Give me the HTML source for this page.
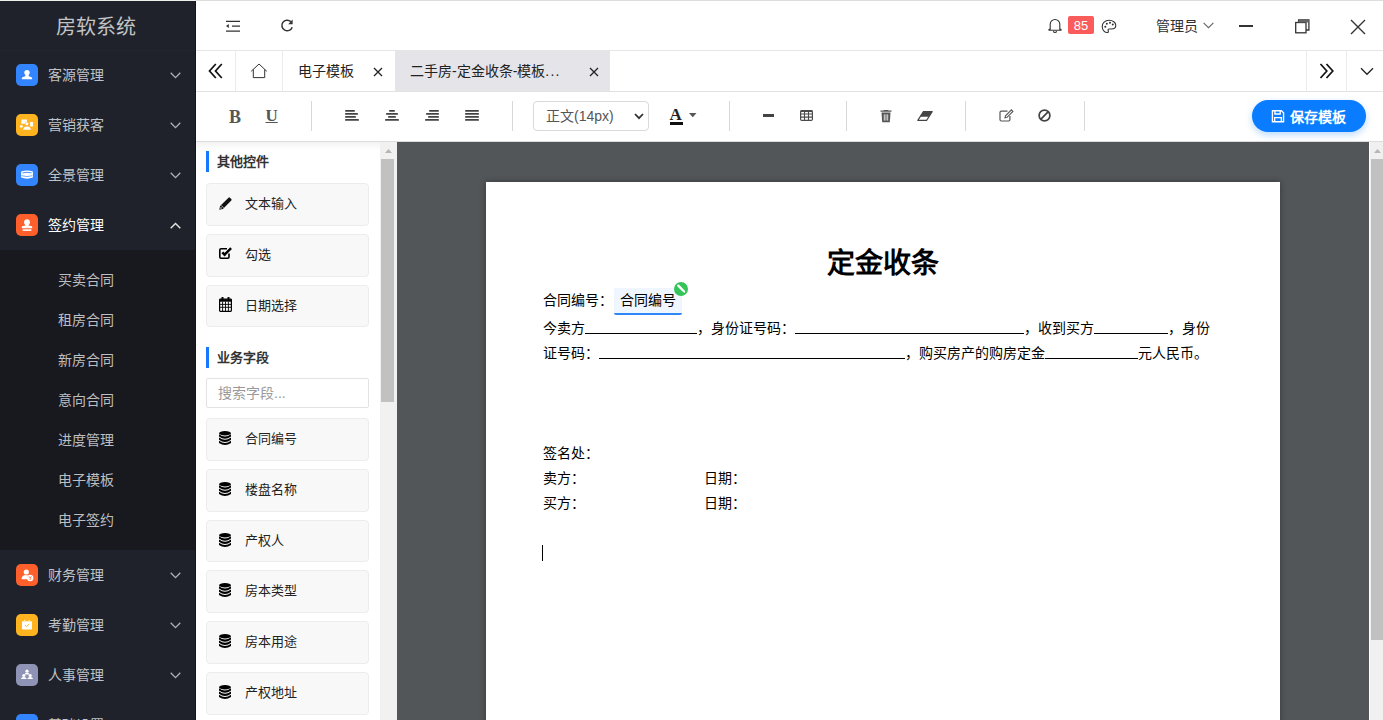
<!DOCTYPE html>
<html lang="zh-CN"><head><meta charset="utf-8">
<style>
*{box-sizing:border-box;margin:0;padding:0}
html,body{width:1383px;height:720px;overflow:hidden;background:#fff;font-family:"Liberation Sans",sans-serif;color:#333}
.abs{position:absolute}
#topline{position:absolute;left:0;top:0;width:1383px;height:1px;background:linear-gradient(90deg,#eef0ee 196px,#dcdedc 196px)}
#side{position:absolute;left:0;top:1px;width:196px;height:719px;background:#1f222a;overflow:hidden;border-right:1px solid #11141a}
#logo{position:absolute;left:0;top:0;width:195px;height:50px;border-bottom:1px solid #23262e;color:#c2c3c5;font-size:20px;line-height:49px;text-align:center;padding-top:2px;padding-right:3px}
.mi{position:absolute;left:0;width:195px;height:50px}
.mi .ic{position:absolute;left:16px;top:14px;width:22px;height:22px;border-radius:5px}
.mi .tx{position:absolute;left:48px;top:1px;line-height:48px;font-size:14px;color:#bfc2c8}
.mi .ch{position:absolute;left:170px;top:21.5px}
#sub{position:absolute;left:0;top:249px;width:195px;height:300px;background:#18191e}
.si{position:absolute;left:58px;font-size:14px;color:#bdbec1;line-height:20px}
#header{position:absolute;left:196px;top:1px;width:1187px;height:50px;background:#fff;border-bottom:1px solid #e6e6e6}
#tabs{position:absolute;left:196px;top:51px;width:1187px;height:41px;background:#fff;border-bottom:1px solid #e2e2e2}
#toolbar{position:absolute;left:196px;top:92px;width:1187px;height:50px;background:#fff;border-bottom:1px solid #dcdcdc}
#lp{position:absolute;left:196px;top:142px;width:201px;height:578px;background:#fff}
#canvas{position:absolute;left:397px;top:142px;width:972px;height:578px;background:#525659;overflow:hidden}
#paper{position:absolute;left:89px;top:40px;width:794px;height:800px;background:#fff;box-shadow:0 0 6px rgba(0,0,0,.35)}
.sep{position:absolute;top:9px;width:1px;height:30px;background:#d8d8d8}
#lpshadow{position:absolute;left:0;top:0;width:184px;height:8px;background:linear-gradient(rgba(0,0,0,.05),rgba(0,0,0,0))}
.ttl{position:absolute;left:10px;height:21px;padding-left:11px;font-size:13px;font-weight:bold;line-height:21px;color:#333}
.ttl .bar{position:absolute;left:0;top:0;width:3px;height:21px;background:#1677ff}
.card{position:absolute;left:10px;width:163px;height:42.8px;background:#f8f8f8;border:1px solid #ececec;border-radius:4px}
.cic{position:absolute;left:13px;top:14px;line-height:0}
.ctx{position:absolute;left:38px;top:10px;font-size:13px;line-height:20px;color:#222}
#search{position:absolute;left:10px;top:236px;width:163px;height:30px;border:1px solid #e3e3e3;border-radius:2px;font-size:14px;line-height:28px;padding-left:11px;color:#9a9a9a}
#lsb{position:absolute;left:184px;top:0;width:17px;height:578px;background:#f1f1f1}
#lthumb{position:absolute;left:1px;top:17px;width:13px;height:243px;background:#c1c1c1}
.pt{position:absolute;left:0;top:62px;width:794px;text-align:center;font-size:28px;font-weight:bold;line-height:40px;color:#000}
.pl{position:absolute;left:56.7px;font-size:14px;line-height:20px;color:#000;white-space:nowrap}
.u{display:inline-block;height:14px;border-bottom:1px solid #000;vertical-align:-1px}
.wg{position:absolute;left:128px;top:106px;width:68px;height:27px;background:#eff6ff;border-bottom:2px solid #2f86f6;border-radius:1px 1px 2px 2px}
.gb{position:absolute;left:188px;top:100px;line-height:0}
#rsb{position:absolute;left:1369px;top:142px;width:14px;height:578px;background:#f0f0f0;border-left:1px solid #fff}
</style></head><body>
<div id="topline"></div>
<div id="side">
  <div id="logo">房软系统</div>
<div class="mi" style="top:49px"><div class="ic" style="background:#3385ff"><svg width="22" height="22" viewBox="0 0 22 22"><circle cx="11" cy="8.6" r="2.7" fill="#fff"/><path d="M9.6 10.5 L12.4 10.5 L12.9 12.3 L16 13.6 L16.2 15.2 L5.8 15.2 L6 13.6 L9.1 12.3Z" fill="#fff"/></svg></div><div class="tx">客源管理</div><svg class="ch" width="11" height="7" viewBox="0 0 11 7"><path d="M0.7 0.7 L5.5 5.6 L10.3 0.7" fill="none" stroke="#aeb1b7" stroke-width="1.3"/></svg></div>
<div class="mi" style="top:99px"><div class="ic" style="background:#ffb31f"><svg width="22" height="22" viewBox="0 0 22 22"><path d="M5.6 5.4H11.2L10.6 9.8H5.1Z" fill="#fff"/><rect x="14.1" y="7.9" width="3" height="4.5" rx="0.4" fill="#fff"/><rect x="3.8" y="11.2" width="3" height="2.4" rx="1" fill="#fff"/><circle cx="10.9" cy="9.7" r="1.9" fill="#ffb31f"/><circle cx="10.9" cy="9.7" r="1.5" fill="#fff"/><path d="M7.2 15.7Q7.5 12.6 11 12.6Q14.5 12.6 14.8 15.7Z" fill="#fff"/></svg></div><div class="tx">营销获客</div><svg class="ch" width="11" height="7" viewBox="0 0 11 7"><path d="M0.7 0.7 L5.5 5.6 L10.3 0.7" fill="none" stroke="#aeb1b7" stroke-width="1.3"/></svg></div>
<div class="mi" style="top:149px"><div class="ic" style="background:#3385ff"><svg width="22" height="22" viewBox="0 0 22 22"><path d="M5.1 7.4Q11 5.6 16.9 7.4V13.6Q11 15.8 5.1 13.6Z" fill="#fff"/><path d="M6.4 8.9Q11 7.6 15.6 8.9" stroke="#3385ff" stroke-width="0.9" fill="none"/><path d="M5.6 11.7Q11 13.4 16.4 11.7" stroke="#3385ff" stroke-width="0.7" fill="none"/></svg></div><div class="tx">全景管理</div><svg class="ch" width="11" height="7" viewBox="0 0 11 7"><path d="M0.7 0.7 L5.5 5.6 L10.3 0.7" fill="none" stroke="#aeb1b7" stroke-width="1.3"/></svg></div>
<div class="mi" style="top:199px"><div class="ic" style="background:#ff5f2a"><svg width="22" height="22" viewBox="0 0 22 22"><circle cx="11" cy="8.2" r="2.9" fill="#fff"/><path d="M9.6 10L12.4 10L12.6 11.6L15.9 12.2Q16.2 12.3 16.2 12.7V14.3H5.8V12.7Q5.8 12.3 6.1 12.2L9.4 11.6Z" fill="#fff"/><rect x="6.6" y="15.3" width="8.8" height="1.6" fill="#fff"/></svg></div><div class="tx" style="color:#fff">签约管理</div><svg class="ch" width="11" height="7" viewBox="0 0 11 7"><path d="M0.7 6.3 L5.5 1.4 L10.3 6.3" fill="none" stroke="#e6e6e6" stroke-width="1.4"/></svg></div>
<div class="mi" style="top:549px"><div class="ic" style="background:#ff5f2a"><svg width="22" height="22" viewBox="0 0 22 22"><circle cx="10.3" cy="8" r="2.6" fill="#fff"/><path d="M5.5 15.2 Q5.8 11.2 9.2 10.9 L12 11.5 Q10.4 13 11.2 15.2Z" fill="#fff"/><circle cx="14.2" cy="14" r="3.2" fill="#fff"/><path d="M13 12.3 L14.2 13.9 L15.4 12.3 M14.2 13.9 L14.2 16" stroke="#ff5f2a" stroke-width="0.8" fill="none"/></svg></div><div class="tx">财务管理</div><svg class="ch" width="11" height="7" viewBox="0 0 11 7"><path d="M0.7 0.7 L5.5 5.6 L10.3 0.7" fill="none" stroke="#aeb1b7" stroke-width="1.3"/></svg></div>
<div class="mi" style="top:599px"><div class="ic" style="background:#ffb31f"><svg width="22" height="22" viewBox="0 0 22 22"><rect x="6" y="7.3" width="10" height="8.3" rx="0.8" fill="#fff"/><rect x="8" y="5.8" width="1.3" height="2.4" fill="#ffe7a8"/><rect x="12.7" y="5.8" width="1.3" height="2.4" fill="#ffe7a8"/><path d="M8.9 11.2 L10.5 12.6 L13.2 10.1" stroke="#ffb31f" stroke-width="1" fill="none"/></svg></div><div class="tx">考勤管理</div><svg class="ch" width="11" height="7" viewBox="0 0 11 7"><path d="M0.7 0.7 L5.5 5.6 L10.3 0.7" fill="none" stroke="#aeb1b7" stroke-width="1.3"/></svg></div>
<div class="mi" style="top:649px"><div class="ic" style="background:#8f93b5"><svg width="22" height="22" viewBox="0 0 22 22"><circle cx="11" cy="7.2" r="1.6" fill="#fff"/><path d="M8.4 10.5 Q8.6 8.8 11 8.8 Q13.4 8.8 13.6 10.5Z" fill="#fff"/><circle cx="7.8" cy="11.5" r="1.6" fill="#fff"/><path d="M5 15 Q5.2 13.1 7.8 13.1 Q10.4 13.1 10.6 15Z" fill="#fff"/><circle cx="14.2" cy="11.5" r="1.6" fill="#fff"/><path d="M11.4 15 Q11.6 13.1 14.2 13.1 Q16.8 13.1 17 15Z" fill="#fff"/></svg></div><div class="tx">人事管理</div><svg class="ch" width="11" height="7" viewBox="0 0 11 7"><path d="M0.7 0.7 L5.5 5.6 L10.3 0.7" fill="none" stroke="#aeb1b7" stroke-width="1.3"/></svg></div>
<div class="mi" style="top:699px"><div class="ic" style="background:#3385ff"><svg width="22" height="22" viewBox="0 0 22 22"><circle cx="11" cy="9" r="3" fill="#fff"/></svg></div><div class="tx">基础设置</div><svg class="ch" width="11" height="7" viewBox="0 0 11 7"><path d="M0.7 0.7 L5.5 5.6 L10.3 0.7" fill="none" stroke="#aeb1b7" stroke-width="1.3"/></svg></div>
<div id="sub"><div class="si" style="top:20px">买卖合同</div><div class="si" style="top:60px">租房合同</div><div class="si" style="top:100px">新房合同</div><div class="si" style="top:140px">意向合同</div><div class="si" style="top:180px">进度管理</div><div class="si" style="top:220px">电子模板</div><div class="si" style="top:260px">电子签约</div></div>
</div>
<div id="header">
<svg class="abs" style="left:29px;top:18px" width="16" height="14" viewBox="0 0 16 14"><path d="M1 2.3H15M7 7.1H15M1 12.1H15" stroke="#333" stroke-width="1.25"/><path d="M1 7.1L3.8 5.1V9.1Z" fill="#333"/></svg>
<svg class="abs" style="left:83px;top:17px" width="16" height="16" viewBox="0 0 16 16"><path d="M13.2 9.2A5.3 5.3 0 1 1 11.8 3.6" fill="none" stroke="#333" stroke-width="1.5"/><path d="M13.6 1.6V6.2H9.2Z" fill="#333"/></svg>
<svg class="abs" style="left:852px;top:17px" width="14" height="15" viewBox="0 0 14 15"><path d="M2.2 11.3V6.3A4.8 4.8 0 0 1 11.8 6.3V11.3H13V12.3H1V11.3Z" fill="none" stroke="#333" stroke-width="1.1" stroke-linejoin="round"/><path d="M5.3 13.2A1.8 1.8 0 0 0 8.7 13.2" fill="none" stroke="#333" stroke-width="1.1"/></svg>
<div class="abs" style="left:872px;top:15px;width:26px;height:18px;background:#fa5c5c;border-radius:2px;color:#fff;font-size:13px;line-height:19.5px;text-align:center">85</div>
<svg class="abs" style="left:905px;top:18px" width="16" height="15" viewBox="0 0 16 15"><path d="M8 1.3C4 1.3 1.2 4.2 1.2 7.6 1.2 10.9 3.7 13.5 6.3 13.5 7.4 13.5 7.6 12.6 7.2 11.8 6.8 11 7.2 10 8.2 10H10.3C12.9 10 14.8 8.6 14.8 6.5 14.8 3.5 11.8 1.3 8 1.3Z" fill="none" stroke="#333" stroke-width="1.1"/><circle cx="4.3" cy="7.8" r="1" fill="#333"/><circle cx="5.8" cy="4.8" r="1" fill="#333"/><circle cx="9" cy="3.8" r="1" fill="#333"/><circle cx="11.8" cy="5.6" r="1" fill="#333"/></svg>
<div class="abs" style="left:960px;top:15px;font-size:14px;line-height:20px;color:#303133">管理员</div>
<svg class="abs" style="left:1007px;top:21px" width="11" height="7" viewBox="0 0 11 7"><path d="M0.6 0.8L5.5 5.7L10.4 0.8" fill="none" stroke="#666" stroke-width="1.1"/></svg>
<div class="abs" style="left:1042.5px;top:24px;width:14.5px;height:1.6px;background:#333"></div>
<svg class="abs" style="left:1099px;top:18px" width="15" height="15" viewBox="0 0 15 15"><rect x="0.7" y="3.5" width="10.3" height="10.3" fill="#fff" stroke="#333" stroke-width="1.3"/><path d="M3.6 3.5V0.8H13.9V11H11" fill="none" stroke="#333" stroke-width="1.3"/><rect x="3.6" y="0.8" width="10.3" height="2.7" fill="#666"/></svg>
<svg class="abs" style="left:1154px;top:18px" width="16" height="16" viewBox="0 0 16 16"><path d="M1 1L15 15M15 1L1 15" stroke="#333" stroke-width="1.4"/></svg>
</div>
<div id="tabs">
<svg class="abs" style="left:12px;top:12px" width="16" height="17" viewBox="0 0 16 17"><path d="M7.8 1L1.5 8L7.8 15M13.8 1L7.5 8L13.8 15" fill="none" stroke="#111" stroke-width="1.7"/></svg>
<div class="abs" style="left:39px;top:0;width:1px;height:40px;background:#ececec"></div>
<svg class="abs" style="left:54px;top:12px" width="18" height="16" viewBox="0 0 18 16"><path d="M1.2 8.3L9 1L16.8 8.3M3.3 6.5V14.6H14.7V6.5" fill="none" stroke="#333" stroke-width="1"/></svg>
<div class="abs" style="left:86px;top:0;width:1px;height:40px;background:#ececec"></div>
<div class="abs" style="left:102px;top:10px;font-size:14px;line-height:20px;color:#222">电子模板</div>
<svg class="abs" style="left:177px;top:16px" width="10" height="10" viewBox="0 0 10 10"><path d="M1 1L9 9M9 1L1 9" stroke="#222" stroke-width="1.3"/></svg>
<div class="abs" style="left:199px;top:0;width:215px;height:40px;background:#e4e4e9"></div>
<div class="abs" style="left:214px;top:10px;font-size:14px;line-height:20px;color:#222;white-space:nowrap">二手房-定金收条-模板<span style="letter-spacing:1.2px">...</span></div>
<svg class="abs" style="left:393px;top:16px" width="10" height="10" viewBox="0 0 10 10"><path d="M1 1L9 9M9 1L1 9" stroke="#222" stroke-width="1.3"/></svg>
<div class="abs" style="left:1110px;top:0;width:1px;height:40px;background:#ececec"></div>
<svg class="abs" style="left:1123px;top:12px" width="16" height="17" viewBox="0 0 16 17"><path d="M1.5 1L7.8 8L1.5 15M7.5 1L13.8 8L7.5 15" fill="none" stroke="#111" stroke-width="1.7"/></svg>
<div class="abs" style="left:1150px;top:0;width:1px;height:40px;background:#ececec"></div>
<svg class="abs" style="left:1164px;top:16px" width="14" height="9" viewBox="0 0 14 9"><path d="M1 1.3L7 7.3L13 1.3" fill="none" stroke="#222" stroke-width="1.3"/></svg>
</div>
<div id="toolbar">
<div class="abs" style="left:33px;top:14px;font-family:'Liberation Serif',serif;font-weight:bold;font-size:18px;line-height:22px;color:#555">B</div>
<div class="abs" style="left:69.5px;top:13px;font-family:'Liberation Serif',serif;font-weight:bold;font-size:17px;line-height:22px;color:#555;text-decoration:underline;text-underline-offset:1px">U</div>
<div class="sep" style="left:115px"></div>
<svg class="abs" style="left:149px;top:17px" width="14" height="13" viewBox="0 0 14 13"><path d="M0.85 1.85H9.15M0.85 4.95H12.15M0.85 7.95H10.15M0.85 10.95H13.15" stroke="#444" stroke-width="1.7" stroke-linecap="round"/></svg>
<svg class="abs" style="left:189px;top:17px" width="14" height="13" viewBox="0 0 14 13"><path d="M4.85 1.85H9.15M1.85 4.95H12.15M3.85 7.95H10.15M0.85 10.95H13.15" stroke="#444" stroke-width="1.7" stroke-linecap="round"/></svg>
<svg class="abs" style="left:229px;top:17px" width="14" height="13" viewBox="0 0 14 13"><path d="M4.85 1.85H13.15M1.85 4.95H13.15M3.85 7.95H13.15M0.85 10.95H13.15" stroke="#444" stroke-width="1.7" stroke-linecap="round"/></svg>
<svg class="abs" style="left:269px;top:17px" width="14" height="13" viewBox="0 0 14 13"><path d="M0.85 1.85H13.15M0.85 4.95H13.15M0.85 7.95H13.15M0.85 10.95H13.15" stroke="#444" stroke-width="1.7" stroke-linecap="round"/></svg>
<div class="sep" style="left:316px"></div>
<div class="abs" style="left:337px;top:9px;width:116px;height:30px;border:1px solid #d9d9d9;border-radius:4px"></div>
<div class="abs" style="left:350px;top:14px;font-size:14px;line-height:20px;color:#555">正文(14px)</div>
<svg class="abs" style="left:438px;top:21px" width="10" height="7" viewBox="0 0 10 7"><path d="M1 1L5 5.2L9 1" fill="none" stroke="#333" stroke-width="1.8"/></svg>
<div class="abs" style="left:473.5px;top:13px;font-family:'Liberation Serif',serif;font-weight:bold;font-size:17px;line-height:20px;color:#222">A</div>
<div class="abs" style="left:474px;top:30px;width:13px;height:3px;background:#111"></div>
<svg class="abs" style="left:493px;top:21px" width="8" height="5" viewBox="0 0 8 5"><path d="M0 0H7.5L3.75 4.2Z" fill="#555"/></svg>
<div class="sep" style="left:533px"></div>
<div class="abs" style="left:567px;top:22px;width:11px;height:3px;background:#444"></div>
<svg class="abs" style="left:604px;top:18px" width="13" height="11" viewBox="0 0 13 11"><rect x="0.6" y="0.7" width="11.8" height="9.7" rx="1.2" fill="none" stroke="#4a4a4a" stroke-width="1.2"/><path d="M0.6 1.2H12.4" stroke="#4a4a4a" stroke-width="1.6"/><path d="M0.6 4H12.4M0.6 7.1H12.4M4.5 1V10.4M8.5 1V10.4" stroke="#4a4a4a" stroke-width="1.1"/></svg>
<div class="sep" style="left:650px"></div>
<svg class="abs" style="left:683.5px;top:18px" width="12" height="13" viewBox="0 0 12 13"><path d="M0.5 1.2H11.5M4.3 1V0.3H7.7V1" stroke="#555" stroke-width="1.2" fill="none"/><path d="M1.5 2.6H10.5L9.8 12.3H2.2Z" fill="#555"/><path d="M4.3 4.3V10.6M6 4.3V10.6M7.7 4.3V10.6" stroke="#fff" stroke-width="0.8"/></svg>
<svg class="abs" style="left:720.5px;top:19px" width="16" height="10" viewBox="0 0 16 10"><path d="M6.4 0.6H15.2L9.6 9.4H0.8Z" fill="none" stroke="#444" stroke-width="1.1" stroke-linejoin="round"/><path d="M6.4 0.6H15.2L11.9 5.8H3.1Z" fill="#444"/></svg>
<div class="sep" style="left:769px"></div>
<svg class="abs" style="left:802.5px;top:16.5px" width="15" height="13" viewBox="0 0 15 13"><path d="M8.5 2.2H2.3Q1 2.2 1 3.5V10.8Q1 12 2.3 12H9.6Q10.9 12 10.9 10.8V7" fill="none" stroke="#555" stroke-width="1.2"/><path d="M12.4 0.9L13.9 2.4L8 8.3L6 8.8L6.5 6.8Z" fill="none" stroke="#555" stroke-width="1.1"/></svg>
<svg class="abs" style="left:842px;top:17px" width="13" height="13" viewBox="0 0 13 13"><circle cx="6.5" cy="6.5" r="5.4" fill="none" stroke="#444" stroke-width="1.7"/><path d="M2.7 10.3L10.3 2.7" stroke="#444" stroke-width="1.7"/></svg>
<div class="sep" style="left:888px"></div>
<div class="abs" style="left:1056px;top:8px;width:114px;height:32px;border-radius:16px;background:#0a7cff;box-shadow:0 3px 7px rgba(10,124,255,.28)"></div>
<svg class="abs" style="left:1075px;top:18px" width="14" height="12.5" viewBox="0 0 14 13"><path d="M1.2 0.8H10.5L12.8 3V12.2H1.2Z" fill="none" stroke="#fff" stroke-width="1.4"/><path d="M3.8 0.8V4.2H9.3V0.8M3.5 12.2V8H10.5V12.2" fill="none" stroke="#fff" stroke-width="1.4"/></svg>
<div class="abs" style="left:1094px;top:15px;font-size:14px;line-height:20px;color:#fff;font-weight:bold">保存模板</div>
</div>
<div id="lp">
<div id="lpshadow"></div>
<div class="ttl" style="top:8.5px"><div class="bar" style="top:0.5px"></div>其他控件</div>
<div class="card" style="top:41.0px"><div class="cic"><svg width="13" height="13" viewBox="0 0 13 13" style="margin-left:-1.5px;margin-top:-1px"><path d="M0.3 12.7L1.1 9.1L9.5 0.7Q10.2 0 10.9 0.7L12.3 2.1Q13 2.8 12.3 3.5L3.9 11.9Z" fill="#111"/><path d="M2.2 8.4L4.6 10.8" stroke="#fff" stroke-width="0.7"/><circle cx="2" cy="11" r="0.7" fill="#fff"/></svg></div><div class="ctx">文本输入</div></div>
<div class="card" style="top:91.8px"><div class="cic"><svg width="14" height="12" viewBox="0 0 14 12" style="margin-left:-1.5px;margin-top:-2px"><path d="M10 6.6V10Q10 11.2 8.8 11.2H2Q0.8 11.2 0.8 10V3Q0.8 1.8 2 1.8H8" fill="none" stroke="#000" stroke-width="1.6"/><path d="M3.3 5.4L5.6 7.7L12.1 1.2" fill="none" stroke="#000" stroke-width="2.4"/></svg></div><div class="ctx">勾选</div></div>
<div class="card" style="top:142.6px"><div class="cic"><svg width="13" height="15" viewBox="0 0 13 15" style="margin-left:-1.5px;margin-top:-3px"><rect x="2.5" y="0" width="2" height="3" rx="0.5" fill="#000"/><rect x="8.5" y="0" width="2" height="3" rx="0.5" fill="#000"/><rect x="0.6" y="2.2" width="11.8" height="12.2" rx="0.8" fill="none" stroke="#000" stroke-width="1.2"/><path d="M0.6 3.5H12.4" stroke="#000" stroke-width="2.4"/><path d="M0.6 7.4H12.4M0.6 10.3H12.4M3.6 4.6V14.4M6.5 4.6V14.4M9.4 4.6V14.4" stroke="#000" stroke-width="0.9"/></svg></div><div class="ctx">日期选择</div></div>
<div class="ttl" style="top:204.5px"><div class="bar" style="top:0.5px"></div>业务字段</div>
<div id="search">搜索字段...</div>
<div class="card" style="top:276.0px"><div class="cic"><svg width="12" height="14" viewBox="0 0 12 14" style="margin-left:-1px;margin-top:-2px"><ellipse cx="6" cy="2.2" rx="6" ry="2.2" fill="#000"/><path d="M0 3.2Q6 7.6 12 3.2V5.5Q6 9.9 0 5.5Z" fill="#000"/><path d="M0 6.5Q6 10.9 12 6.5V8.8Q6 13.2 0 8.8Z" fill="#000"/><path d="M0 9.8Q6 14.2 12 9.8V11.9Q6 15.9 0 11.9Z" fill="#000"/></svg></div><div class="ctx">合同编号</div></div>
<div class="card" style="top:326.8px"><div class="cic"><svg width="12" height="14" viewBox="0 0 12 14" style="margin-left:-1px;margin-top:-2px"><ellipse cx="6" cy="2.2" rx="6" ry="2.2" fill="#000"/><path d="M0 3.2Q6 7.6 12 3.2V5.5Q6 9.9 0 5.5Z" fill="#000"/><path d="M0 6.5Q6 10.9 12 6.5V8.8Q6 13.2 0 8.8Z" fill="#000"/><path d="M0 9.8Q6 14.2 12 9.8V11.9Q6 15.9 0 11.9Z" fill="#000"/></svg></div><div class="ctx">楼盘名称</div></div>
<div class="card" style="top:377.6px"><div class="cic"><svg width="12" height="14" viewBox="0 0 12 14" style="margin-left:-1px;margin-top:-2px"><ellipse cx="6" cy="2.2" rx="6" ry="2.2" fill="#000"/><path d="M0 3.2Q6 7.6 12 3.2V5.5Q6 9.9 0 5.5Z" fill="#000"/><path d="M0 6.5Q6 10.9 12 6.5V8.8Q6 13.2 0 8.8Z" fill="#000"/><path d="M0 9.8Q6 14.2 12 9.8V11.9Q6 15.9 0 11.9Z" fill="#000"/></svg></div><div class="ctx">产权人</div></div>
<div class="card" style="top:428.4px"><div class="cic"><svg width="12" height="14" viewBox="0 0 12 14" style="margin-left:-1px;margin-top:-2px"><ellipse cx="6" cy="2.2" rx="6" ry="2.2" fill="#000"/><path d="M0 3.2Q6 7.6 12 3.2V5.5Q6 9.9 0 5.5Z" fill="#000"/><path d="M0 6.5Q6 10.9 12 6.5V8.8Q6 13.2 0 8.8Z" fill="#000"/><path d="M0 9.8Q6 14.2 12 9.8V11.9Q6 15.9 0 11.9Z" fill="#000"/></svg></div><div class="ctx">房本类型</div></div>
<div class="card" style="top:479.2px"><div class="cic"><svg width="12" height="14" viewBox="0 0 12 14" style="margin-left:-1px;margin-top:-2px"><ellipse cx="6" cy="2.2" rx="6" ry="2.2" fill="#000"/><path d="M0 3.2Q6 7.6 12 3.2V5.5Q6 9.9 0 5.5Z" fill="#000"/><path d="M0 6.5Q6 10.9 12 6.5V8.8Q6 13.2 0 8.8Z" fill="#000"/><path d="M0 9.8Q6 14.2 12 9.8V11.9Q6 15.9 0 11.9Z" fill="#000"/></svg></div><div class="ctx">房本用途</div></div>
<div class="card" style="top:530.0px"><div class="cic"><svg width="12" height="14" viewBox="0 0 12 14" style="margin-left:-1px;margin-top:-2px"><ellipse cx="6" cy="2.2" rx="6" ry="2.2" fill="#000"/><path d="M0 3.2Q6 7.6 12 3.2V5.5Q6 9.9 0 5.5Z" fill="#000"/><path d="M0 6.5Q6 10.9 12 6.5V8.8Q6 13.2 0 8.8Z" fill="#000"/><path d="M0 9.8Q6 14.2 12 9.8V11.9Q6 15.9 0 11.9Z" fill="#000"/></svg></div><div class="ctx">产权地址</div></div>
<div class="card" style="top:580.8px"><div class="cic"><svg width="12" height="14" viewBox="0 0 12 14" style="margin-left:-1px;margin-top:-2px"><ellipse cx="6" cy="2.2" rx="6" ry="2.2" fill="#000"/><path d="M0 3.2Q6 7.6 12 3.2V5.5Q6 9.9 0 5.5Z" fill="#000"/><path d="M0 6.5Q6 10.9 12 6.5V8.8Q6 13.2 0 8.8Z" fill="#000"/><path d="M0 9.8Q6 14.2 12 9.8V11.9Q6 15.9 0 11.9Z" fill="#000"/></svg></div><div class="ctx">建筑面积</div></div>
<div id="lsb"><svg class="abs" style="left:5px;top:7px" width="7" height="4" viewBox="0 0 7 4"><path d="M0 4H7L3.5 0Z" fill="#b5b5b5"/></svg><div id="lthumb"></div></div>
</div>
<div id="canvas"><div id="paper">
<div class="pt">定金收条</div>
<div class="pl" style="top:108px">合同编号：</div>
<div class="wg"></div><div class="pl" style="top:108px;left:134px">合同编号</div>
<div class="gb"><svg width="14" height="14" viewBox="0 0 14 14"><circle cx="7" cy="7" r="7" fill="#34c45a"/><path d="M4.3 3.7L9.6 9" stroke="#fff" stroke-width="2.4" stroke-linecap="round"/><path d="M9.6 9L10.6 10" stroke="#fff" stroke-width="1.2" stroke-linecap="round"/></svg></div>
<div class="pl" style="top:136px">今卖方<span class="u" style="width:112px"></span>，身份证号码：<span class="u" style="width:229px"></span>，收到买方<span class="u" style="width:74px"></span>，身份</div>
<div class="pl" style="top:161px">证号码：<span class="u" style="width:306.3px"></span>，购买房产的购房定金<span class="u" style="width:93.3px"></span>元人民币。</div>
<div class="pl" style="top:261px">签名处：</div>
<div class="pl" style="top:286px">卖方：</div>
<div class="pl" style="top:286px;left:217.5px">日期：</div>
<div class="pl" style="top:311px">买方：</div>
<div class="pl" style="top:311px;left:217.5px">日期：</div>
<div class="abs" style="left:56px;top:363px;width:1px;height:16px;background:#000"></div>
</div></div>
<div id="rsb"><svg class="abs" style="left:3.5px;top:7px" width="7" height="4" viewBox="0 0 7 4"><path d="M0 4H7L3.5 0Z" fill="#b5b5b5"/></svg><div class="abs" style="left:1px;top:17px;width:13px;height:481px;background:#c1c1c1"></div></div>
</body></html>
